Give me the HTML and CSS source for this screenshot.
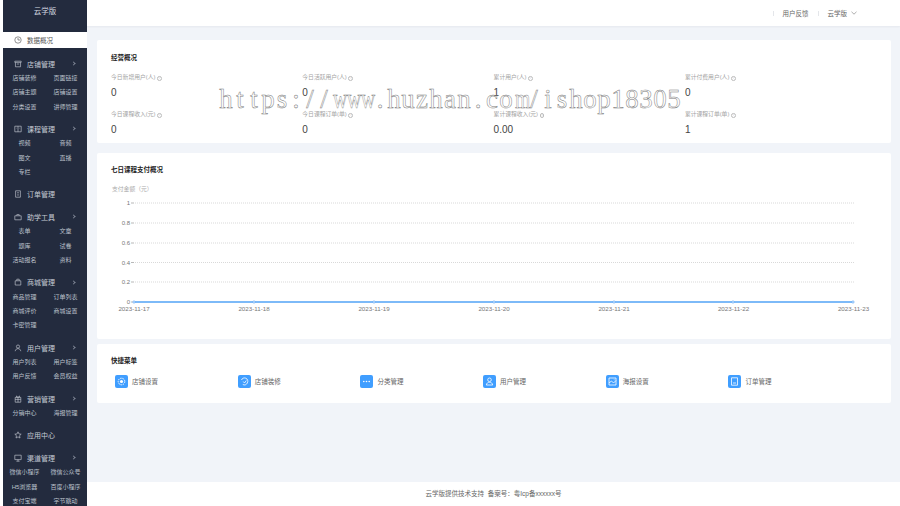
FILE: index.html
```html
<!DOCTYPE html>
<html lang="zh-CN">
<head>
<meta charset="utf-8">
<title>云学版</title>
<link rel="stylesheet" href="styles.css">
</head>
<body>
<aside class="side">
  <div class="brand">云学版</div>
  <div class="active"><svg class="ic" viewBox="0 0 10 10"><circle cx="5" cy="5" r="4"/><path d="M5 2.5V5H7.5"/></svg><span>数据概况</span></div>

  <section class="group">
    <div class="main"><svg class="ic" viewBox="0 0 10 10"><path d="M1 1.5H9V3H1ZM1.8 3V8.5H8.2V3M3.5 5H6.5"/></svg><span>店铺管理</span><b class="chev"></b></div>
    <div class="subs"><a>店铺装修</a><a>页面链接</a><a>店铺主题</a><a>店铺设置</a><a>分类设置</a><a>讲师管理</a></div>
  </section>
  <section class="group">
    <div class="main"><svg class="ic" viewBox="0 0 10 10"><path d="M1 1.5H9V8.5H1ZM5 1.5V8.5M3 4H3.5M6.5 4H7"/></svg><span>课程管理</span><b class="chev"></b></div>
    <div class="subs"><a>视频</a><a>音频</a><a>图文</a><a>直播</a><a>专栏</a></div>
  </section>
  <section class="group">
    <div class="main"><svg class="ic" viewBox="0 0 10 10"><path d="M2 1H8V9H2ZM3.8 3.5H6.2M3.8 6.2H6.2"/></svg><span>订单管理</span></div>
  </section>
  <section class="group">
    <div class="main"><svg class="ic" viewBox="0 0 10 10"><path d="M1 3.500H9V8.500H1ZM3.500 3.500V2H6.500V3.500"/></svg><span>助学工具</span><b class="chev"></b></div>
    <div class="subs"><a>表单</a><a>文章</a><a>题库</a><a>试卷</a><a>活动报名</a><a>资料</a></div>
  </section>
  <section class="group">
    <div class="main"><svg class="ic" viewBox="0 0 10 10"><path d="M1.5 3.5H8.5V8.8H1.5ZM3.5 3.5V1.5H6.5V3.5"/></svg><span>商城管理</span><b class="chev"></b></div>
    <div class="subs"><a>商品管理</a><a>订单列表</a><a>商城评价</a><a>商城设置</a><a>卡密管理</a></div>
  </section>
  <section class="group">
    <div class="main"><svg class="ic" viewBox="0 0 10 10"><circle cx="5" cy="3.2" r="2"/><path d="M1.5 9C1.8 6.8 3.2 5.8 5 5.8S8.2 6.8 8.5 9"/></svg><span>用户管理</span><b class="chev"></b></div>
    <div class="subs"><a>用户列表</a><a>用户标签</a><a>用户反馈</a><a>会员权益</a></div>
  </section>
  <section class="group">
    <div class="main"><svg class="ic" viewBox="0 0 10 10"><path d="M1.5 3H8.5V9H1.5ZM1.5 5.5H8.5M5 3V9M3.5 3 3 1.2 5 3 7 1.2 6.5 3"/></svg><span>营销管理</span><b class="chev"></b></div>
    <div class="subs"><a>分销中心</a><a>海报管理</a></div>
  </section>
  <section class="group">
    <div class="main"><svg class="ic" viewBox="0 0 10 10"><path d="M5 1 6.2 3.7 9 4 6.9 5.9 7.5 8.8 5 7.3 2.5 8.8 3.1 5.9 1 4 3.8 3.7Z"/></svg><span>应用中心</span></div>
  </section>
  <section class="group">
    <div class="main"><svg class="ic" viewBox="0 0 10 10"><path d="M1 1.5H9V7H1ZM3 9H7M5 7V9"/></svg><span>渠道管理</span><b class="chev"></b></div>
    <div class="subs"><a>微信小程序</a><a>微信公众号</a><a>H5浏览器</a><a>百度小程序</a><a>支付宝端</a><a>字节跳动</a></div>
  </section>
</aside>

<div class="page">
  <header class="top">
    <span class="sep"></span><span class="link">用户反馈</span><span class="sep"></span><span class="link">云学版</span>
    <svg class="down" viewBox="0 0 6 4"><path d="M.5.8 3 3.2 5.5.8"/></svg>
  </header>

  <main class="content">
    <section class="card overview">
      <h2>经营概况</h2>
      <div class="stats">
        <div class="stat"><p>今日新增用户(人) <i>i</i></p><strong>0</strong></div>
        <div class="stat"><p>今日活跃用户(人) <i>i</i></p><strong>0</strong></div>
        <div class="stat"><p>累计用户(人) <i>i</i></p><strong>1</strong></div>
        <div class="stat"><p>累计付费用户(人) <i>i</i></p><strong>0</strong></div>
        <div class="stat"><p>今日课程收入(元) <i>i</i></p><strong>0</strong></div>
        <div class="stat"><p>今日课程订单(单) <i>i</i></p><strong>0</strong></div>
        <div class="stat"><p>累计课程收入(元) <i>i</i></p><strong>0.00</strong></div>
        <div class="stat"><p>累计课程订单(单) <i>i</i></p><strong>1</strong></div>
      </div>
    </section>

    <section class="card trend">
      <h2>七日课程支付概况</h2>
      <svg class="chart" viewBox="97 180 794 140">
        <text class="unit" x="112" y="191">支付金额（元）</text>
        <g class="grid">
          <path d="M135 203H854M135 223H854M135 243H854M135 262.500H854M135 282H854"/>
        </g>
        <g class="ticks">
          <path d="M131 203H134M131 223H134M131 243H134M131 262.500H134M131 282H134M131 302H134"/>
        </g>
        <g class="ylabels">
          <text x="130" y="205">1</text><text x="130" y="225">0.8</text><text x="130" y="245">0.6</text>
          <text x="130" y="264.500">0.4</text><text x="130" y="284">0.2</text><text x="130" y="304">0</text>
        </g>
        <path class="line" d="M134 302H854"/>
        <g class="dots">
          <circle cx="134" cy="302" r="1.200"/><circle cx="254" cy="302" r="1.200"/><circle cx="374" cy="302" r="1.200"/><circle cx="494" cy="302" r="1.200"/><circle cx="614" cy="302" r="1.200"/><circle cx="733" cy="302" r="1.200"/><circle cx="853" cy="302" r="1.200"/>
        </g>
        <g class="xlabels">
          <text x="134" y="310.500">2023-11-17</text><text x="254" y="310.500">2023-11-18</text><text x="374" y="310.500">2023-11-19</text><text x="494" y="310.500">2023-11-20</text><text x="614" y="310.500">2023-11-21</text><text x="733.500" y="310.500">2023-11-22</text><text x="853.500" y="310.500">2023-11-23</text>
        </g>
      </svg>
    </section>

    <section class="card quick">
      <h2>快捷菜单</h2>
      <div class="shortcuts">
        <div class="shortcut"><svg class="tile" viewBox="0 0 13 13"><rect width="13" height="13" rx="2"/><circle cx="6.500" cy="6.500" r="1.600"/><circle class="dash" cx="6.500" cy="6.500" r="3.300"/></svg><span>店铺设置</span></div>
        <div class="shortcut"><svg class="tile" viewBox="0 0 13 13"><rect width="13" height="13" rx="2"/><path class="w" d="M3.500 5C4 3.300 6 2.500 7.800 3.200 9.800 4 10.300 6.200 9.300 8 8.500 9.800 6.500 10.500 4.800 9.500M5.200 6.500 6.500 8 8.300 5.500"/></svg><span>店铺装修</span></div>
        <div class="shortcut"><svg class="tile" viewBox="0 0 13 13"><rect width="13" height="13" rx="2"/><circle class="f" cx="3.800" cy="6.500" r=".8"/><circle class="f" cx="6.500" cy="6.500" r=".8"/><circle class="f" cx="9.200" cy="6.500" r=".8"/></svg><span>分类管理</span></div>
        <div class="shortcut"><svg class="tile" viewBox="0 0 13 13"><rect width="13" height="13" rx="2"/><circle class="w" cx="6.500" cy="4.800" r="1.800"/><path class="w" d="M3.300 10C3.600 8 5 7.300 6.500 7.300S9.400 8 9.700 10Z"/></svg><span>用户管理</span></div>
        <div class="shortcut"><svg class="tile" viewBox="0 0 13 13"><rect width="13" height="13" rx="2"/><path class="w" d="M3 3H10V10H3ZM3 8 5.500 6 7.500 8 10 5.500M7.800 4.800H8.500"/></svg><span>海报设置</span></div>
        <div class="shortcut"><svg class="tile" viewBox="0 0 13 13"><rect width="13" height="13" rx="2"/><path class="w" d="M3.500 2.800H9.500V10.200H3.500ZM5 8H8"/></svg><span>订单管理</span></div>
      </div>
    </section>
  </main>

  <footer class="foot">云学版提供技术支持&nbsp;&nbsp;备案号：粤Icp备xxxxxx号</footer>
</div>

<div class="mark"><i>h</i><i>t</i><i>t</i><i>p</i><i>s</i><i>:</i><i>/</i><i>/</i><i class="sq">w</i><i class="sq">w</i><i class="sq">w</i><i>.</i><i>h</i><i>u</i><i>z</i><i>h</i><i>a</i><i>n</i><i>.</i><i>c</i><i>o</i><i class="sq">m</i><i>/</i><i>i</i><i>s</i><i>h</i><i>o</i><i>p</i><i>1</i><i>8</i><i>3</i><i>0</i><i>5</i></div>
</body>
</html>
```

FILE: styles.css
```css
* { box-sizing: border-box; }
html, body { height: 100%; }
body {
  margin: 0;
  height: 506px;
  overflow: hidden;
  display: flex;
  background: #fff;
  font-family: "Liberation Sans", "Noto Sans CJK SC", sans-serif;
  color: #333;
}
.side {
  width: 84px;
  margin-left: 3px;
  flex: none;
  height: 506px;
  overflow: hidden;
  background: #232b3e;
  color: #c6cbd5;
}
.brand {
  height: 26px;
  margin-bottom: 6px;
  font-size: 7.500px;
  line-height: 24px;
  text-align: center;
  color: #d5d9e0;
}
.active {
  height: 16px;
  display: flex;
  align-items: center;
  background: #fff;
  color: #555;
  font-size: 6.500px;
  padding-left: 11px;
  gap: 5px;
  margin-bottom: 8px;
}
.ic {
  width: 8px;
  height: 8px;
  flex: none;
  fill: none;
  stroke: currentColor;
  stroke-width: .8;
}
.group { margin-bottom: 7.500px; }
.main {
  height: 15px;
  display: flex;
  align-items: center;
  padding-left: 11px;
  gap: 5px;
  font-size: 7px;
}
.chev {
  width: 3px;
  height: 3px;
  margin-left: 12px;
  border-top: .6px solid #7f8695;
  border-right: .6px solid #7f8695;
  transform: rotate(45deg);
}
.subs {
  display: grid;
  grid-template-columns: 41px 41px;
  padding-left: 1px;
}
.subs a {
  height: 14.300px;
  line-height: 14.300px;
  font-size: 6px;
  text-align: center;
  white-space: nowrap;
  color: #bcc1cc;
}
.page {
  flex: 1;
  min-width: 0;
  display: flex;
  flex-direction: column;
  background: #f1f4f9;
}
.top {
  height: 26px;
  flex: none;
  display: flex;
  align-items: center;
  justify-content: flex-end;
  padding-right: 43px;
  background: #fff;
  box-shadow: 0 1px 2px rgba(0, 21, 41, .05);
  font-size: 6.500px;
  color: #666;
}
.sep {
  width: 1px;
  height: 5px;
  background: #e4e6ea;
  margin: 0 9px;
}
.down {
  width: 6px;
  height: 4px;
  margin-left: 4px;
  fill: none;
  stroke: #777;
  stroke-width: .6;
}
.content {
  flex: 1;
  padding: 14px 9px 0 10px;
}
.card {
  background: #fff;
  border-radius: 2px;
}
h2 {
  margin: 0;
  height: 10px;
  font-size: 6.500px;
  line-height: 10px;
  font-weight: 700;
  color: #222;
}
.overview {
  height: 103px;
  padding: 13px 14px 8px;
}
.stats {
  margin-top: 9px;
  display: grid;
  grid-template-columns: repeat(4, 191.300px);
  row-gap: 11px;
}
.stat p {
  margin: 0;
  height: 10px;
  line-height: 10px;
  font-size: 5.800px;
  color: #a3a3a3;
}
.stat i {
  display: inline-block;
  width: 4.800px;
  height: 4.800px;
  line-height: 3.800px;
  border: .4px solid #bbb;
  border-radius: 50%;
  font-size: 3.400px;
  font-style: normal;
  text-align: center;
  color: #c4c4c4;
  vertical-align: .3px;
}
.stat strong {
  display: block;
  margin-top: 6px;
  height: 10px;
  line-height: 10px;
  font-size: 10px;
  font-weight: 400;
  color: #444;
}
.trend {
  height: 186px;
  margin-top: 10px;
  padding-top: 12px;
}
.trend h2 { margin-left: 14px; }
.chart {
  display: block;
  width: 794px;
  height: 140px;
  margin-top: 5px;
}
.chart text {
  font-size: 6px;
  fill: #777;
}
.chart .unit { fill: #aaa; font-size: 5.800px; }
.ylabels text { text-anchor: end; }
.xlabels text { text-anchor: middle; font-size: 6.200px; }
.grid path {
  fill: none;
  stroke: #c8c8c8;
  stroke-width: .7;
  stroke-dasharray: 1 1;
}
.ticks path { fill: none; stroke: #888; stroke-width: .6; }
.line { fill: none; stroke: #52a3f6; stroke-width: 1.300; }
.dots circle { fill: #cfe4fb; stroke: #52a3f6; stroke-width: .5; }
.quick {
  height: 59px;
  margin-top: 5px;
  padding: 12px 14px 0;
}
.shortcuts {
  margin-top: 8.500px;
  margin-left: 4px;
  display: grid;
  grid-template-columns: repeat(6, 122.700px);
}
.shortcut {
  display: flex;
  align-items: center;
  gap: 4px;
  font-size: 6.500px;
  color: #666;
}
.tile {
  width: 13px;
  height: 13px;
  flex: none;
}
.tile rect { fill: #409eff; }
.tile circle { fill: #fff; }
.tile .dash { fill: none; stroke: #fff; stroke-width: 1; stroke-dasharray: 1.500 .8; }
.tile .w { fill: none; stroke: #fff; stroke-width: .8; }
.foot {
  height: 24px;
  flex: none;
  background: #fff;
  text-align: center;
  line-height: 24px;
  font-size: 6.500px;
  color: #666;
}
.mark {
  position: absolute;
  left: 219px;
  top: 84px;
  display: flex;
  font-family: "Liberation Serif", serif;
  font-size: 28px;
  line-height: 30px;
  color: transparent;
  -webkit-text-stroke: .5px #7a7a7a;
}
.mark i {
  width: 14px;
  font-style: normal;
  text-align: center;
  transform: scaleX(.96);
}
.mark .sq { transform: scaleX(.7); }
.mark i + i { margin-left: 0; }
```
